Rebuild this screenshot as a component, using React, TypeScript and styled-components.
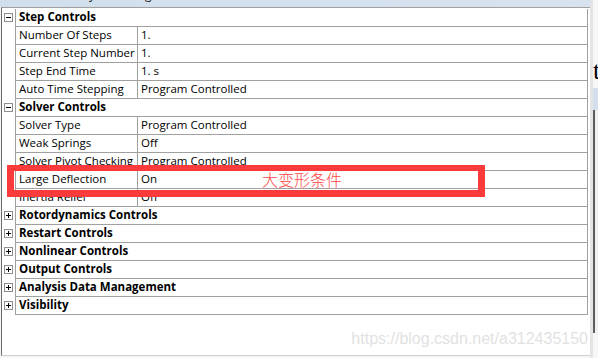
import React from 'react'
import styled, { createGlobalStyle } from 'styled-components'

const GlobalStyle = createGlobalStyle`
  * { box-sizing: border-box; }
  html, body { margin: 0; padding: 0; background: #ffffff; }
  body { font-family: "Open Sans", "Noto Sans", sans-serif; }
`

type Prop = { name: string; value: string }
type Group = { title: string; open: boolean; props: Prop[] }

const groups: Group[] = [
  {
    title: 'Step Controls',
    open: true,
    props: [
      { name: 'Number Of Steps', value: '1.' },
      { name: 'Current Step Number', value: '1.' },
      { name: 'Step End Time', value: '1. s' },
      { name: 'Auto Time Stepping', value: 'Program Controlled' },
    ],
  },
  {
    title: 'Solver Controls',
    open: true,
    props: [
      { name: 'Solver Type', value: 'Program Controlled' },
      { name: 'Weak Springs', value: 'Off' },
      { name: 'Solver Pivot Checking', value: 'Program Controlled' },
      { name: 'Large Deflection', value: 'On' },
      { name: 'Inertia Relief', value: 'Off' },
    ],
  },
  { title: 'Rotordynamics Controls', open: false, props: [] },
  { title: 'Restart Controls', open: false, props: [] },
  { title: 'Nonlinear Controls', open: false, props: [] },
  { title: 'Output Controls', open: false, props: [] },
  { title: 'Analysis Data Management', open: false, props: [] },
  { title: 'Visibility', open: false, props: [] },
]

function Expander({ open }: { open: boolean }) {
  return (
    <svg width="9" height="9" viewBox="0 0 9 9" shapeRendering="crispEdges">
      <rect x="0.5" y="0.5" width="8" height="8" fill="#fff" stroke="#8e8e8e" />
      <path d="M2 4.5h5" stroke="#000" />
      {!open && <path d="M4.5 2v5" stroke="#000" />}
    </svg>
  )
}

export default function App() {
  return (
    <>
      <GlobalStyle />
      <Page>
        <Panel>
          <TitleBar>
            <TitleText>Details of "Analysis Settings"</TitleText>
          </TitleBar>
          <Body>
            <Table>
              {groups.map((g) => (
                <React.Fragment key={g.title}>
                  <Row>
                    <Gutter>
                      <Expander open={g.open} />
                    </Gutter>
                    <Cells>
                      <GroupCell>{g.title}</GroupCell>
                    </Cells>
                  </Row>
                  {g.open &&
                    g.props.map((p) => (
                      <Row key={p.name}>
                        <Gutter />
                        <Cells>
                          <NameCell>{p.name}</NameCell>
                          <ValueCell>{p.value}</ValueCell>
                        </Cells>
                      </Row>
                    ))}
                </React.Fragment>
              ))}
            </Table>
          </Body>
        </Panel>
        <SideStrip>
          <SideTop>
            <BackGlyph>t</BackGlyph>
          </SideTop>
          <SideTab />
          <SideEdge />
        </SideStrip>

        <Highlight />
        <Note>大变形条件</Note>
        <Watermark>https://blog.csdn.net/a312435150</Watermark>
      </Page>
    </>
  )
}

const Page = styled.div`
  position: relative;
  width: 598px;
  height: 358px;
  display: flex;
  background: #f6f6f6;
  overflow: hidden;
`

const Panel = styled.div`
  width: 590px;
  display: flex;
  flex-direction: column;
`

const TitleBar = styled.div`
  height: 7px;
  background: linear-gradient(to right, #d1deec, #d7e3ef);
  overflow: hidden;
  padding-left: 4px;
  font-size: 12px;
  line-height: 15px;
  color: #1a1a1a;
`

const TitleText = styled.div`
  margin-top: -13px;
  white-space: nowrap;
`

const Body = styled.div`
  height: 349px;
  margin-left: 1px;
  border-top: 1px solid #a0a0a0;
  border-left: 1px solid #6a6a6a;
  border-bottom: 1px solid #cdcdcd;
  padding-right: 2px;
  background: #ffffff;
`

const Table = styled.div`
  padding-top: 1px;
  display: flex;
  flex-direction: column;
`

const Row = styled.div`
  display: flex;
  height: 18px;
  font-size: 11.5px;
  line-height: 16px;
  color: #000;
`

const Gutter = styled.div`
  width: 14px;
  border-right: 1px solid #a0a0a0;
  display: flex;
  align-items: center;
  justify-content: center;
  padding-bottom: 1px;
`

const Cells = styled.div`
  flex: 1;
  display: flex;
  border-bottom: 1px solid #a0a0a0;
  border-right: 1px solid #a0a0a0;
`

const GroupCell = styled.div`
  flex: 1;
  padding-left: 3px;
  font-weight: 700;
  white-space: nowrap;
`

const NameCell = styled.div`
  width: 122px;
  padding-left: 3px;
  border-right: 1px solid #a0a0a0;
  white-space: nowrap;
  overflow: hidden;
`

const ValueCell = styled.div`
  flex: 1;
  padding-left: 3px;
  white-space: nowrap;
`

const SideStrip = styled.div`
  flex: 1;
  display: flex;
  flex-direction: column;
  border-left: 3px solid #e4e4e4;
  background: #f7f7f7;
  overflow: hidden;
`

const SideTop = styled.div`
  height: 88px;
  padding-top: 58px;
`

const BackGlyph = styled.div`
  font-family: "Liberation Serif", serif;
  font-size: 26px;
  line-height: 26px;
  color: #000;
`

const SideTab = styled.div`
  height: 22px;
  background: #d3dfec;
`

const SideEdge = styled.div`
  height: 223px;
  border-left: 2px solid #5e5e5e;
  background: #f0f0f0;
`

const Highlight = styled.div`
  position: absolute;
  left: 7px;
  top: 165px;
  width: 478px;
  height: 32px;
  border: 7px solid #fb3b3b;
  border-top-width: 6px;
`

const Note = styled.div`
  position: absolute;
  left: 262px;
  top: 170px;
  font-family: "Noto Sans CJK SC", sans-serif;
  font-weight: 300;
  font-size: 16px;
  line-height: 18px;
  color: #ff4545;
`

const Watermark = styled.div`
  position: absolute;
  right: 10px;
  top: 331px;
  font-family: "Liberation Sans", Arial, sans-serif;
  font-size: 16px;
  line-height: 16px;
  color: #e2e2e2;
`
